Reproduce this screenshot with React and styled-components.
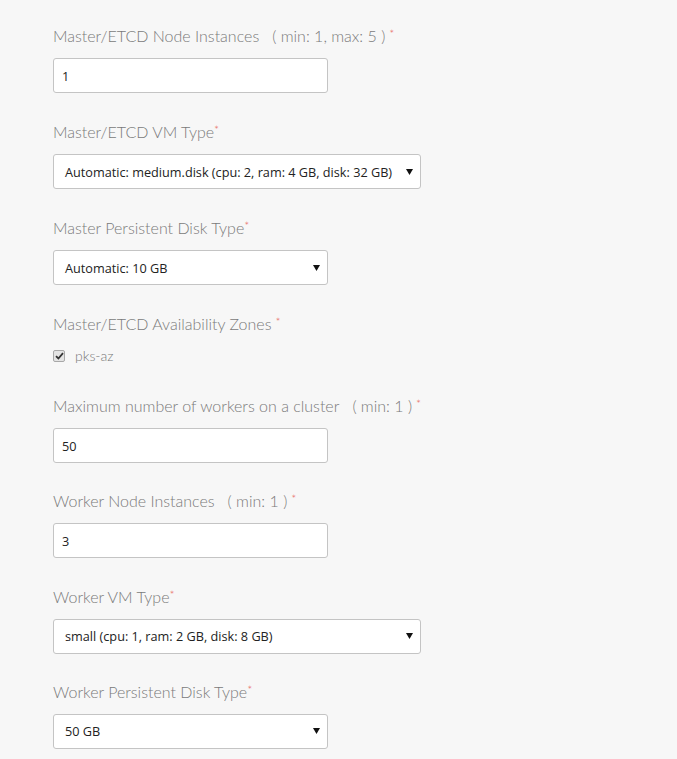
import React from 'react'
import styled, { createGlobalStyle } from 'styled-components'

const GlobalStyle = createGlobalStyle`
  html, body {
    margin: 0;
    background: #f7f7f7;
  }
`

const fields = [
  { label: 'Master/ETCD Node Instances', hint: '( min: 1, max: 5 )', kind: 'input', value: '1', width: 275 },
  { label: 'Master/ETCD VM Type', kind: 'select', value: 'Automatic: medium.disk (cpu: 2, ram: 4 GB, disk: 32 GB)', width: 368 },
  { label: 'Master Persistent Disk Type', kind: 'select', value: 'Automatic: 10 GB', width: 275 },
  { label: 'Master/ETCD Availability Zones', spaced: true, kind: 'check', value: 'pks-az' },
  { label: 'Maximum number of workers on a cluster', hint: '( min: 1 )', kind: 'input', value: '50', width: 275, tight: true },
  { label: 'Worker Node Instances', hint: '( min: 1 )', kind: 'input', value: '3', width: 275, tight: true },
  { label: 'Worker VM Type', kind: 'select', value: 'small (cpu: 1, ram: 2 GB, disk: 8 GB)', width: 368, tight: true },
  { label: 'Worker Persistent Disk Type', kind: 'select', value: '50 GB', width: 275, tight: true },
]

export default function App() {
  return (
    <Page>
      <GlobalStyle />
      {fields.map((f) => (
        <Field key={f.label} $check={f.kind === 'check'} $tight={f.tight}>
          <Label>
            {f.label}
            {f.hint && <Hint>{f.hint}</Hint>}
            <Required $spaced={f.hint || f.spaced}>*</Required>
          </Label>
          {f.kind === 'input' && <TextInput $width={f.width} defaultValue={f.value} />}
          {f.kind === 'select' && (
            <SelectBox $width={f.width}>
              <span>{f.value}</span>
              <Arrow width="7" height="6" viewBox="0 0 7 6">
                <path d="M0 0 H7 L3.5 6 Z" fill="#111" />
              </Arrow>
            </SelectBox>
          )}
          {f.kind === 'check' && (
            <CheckRow>
              <CheckBox>
                <svg width="9" height="8" viewBox="0 0 9 8">
                  <path d="M1 4.2 L3.4 6.5 L8 1.2" fill="none" stroke="#333" strokeWidth="1.8" />
                </svg>
              </CheckBox>
              <CheckLabel>{f.value}</CheckLabel>
            </CheckRow>
          )}
        </Field>
      ))}
    </Page>
  )
}

const Page = styled.div`
  padding: 25px 53px 0 53px;
  font-family: Lato, "Open Sans", sans-serif;
`

const Field = styled.div`
  display: flex;
  flex-direction: column;
  align-items: flex-start;
  gap: ${(p) => (p.$check ? '8px' : '11px')};
  margin-bottom: ${(p) => (p.$check ? '27px' : p.$tight ? '27.3px' : '28px')};
`

const Label = styled.label`
  font-size: 16px;
  line-height: 22px;
  font-weight: 300;
  color: #7a7a7a;
  white-space: nowrap;
`

const Hint = styled.span`
  margin-left: 13px;
`

const Required = styled.sup`
  color: #e8675d;
  font-size: 12px;
  line-height: 0;
  vertical-align: 4px;
  margin-left: ${(p) => (p.$spaced ? '4px' : '0')};
`

const TextInput = styled.input`
  box-sizing: border-box;
  width: ${(p) => p.$width}px;
  height: 35px;
  padding: 0 8px;
  border: 1px solid #c4c4c4;
  border-radius: 3px;
  background: #fff;
  font-family: "Open Sans", sans-serif;
  font-size: 12.7px;
  color: #222;
  outline: none;
`

const SelectBox = styled.div`
  box-sizing: border-box;
  width: ${(p) => p.$width}px;
  height: 35px;
  padding: 0 7px 0 11px;
  display: flex;
  align-items: center;
  justify-content: space-between;
  border: 1px solid #c4c4c4;
  border-radius: 3px;
  background: #fff;
  font-family: "Open Sans", sans-serif;
  font-size: 12.7px;
  color: #222;
`

const Arrow = styled.svg`
  flex-shrink: 0;
`

const CheckRow = styled.div`
  display: flex;
  align-items: center;
  gap: 10px;
  height: 25px;
`

const CheckBox = styled.span`
  box-sizing: border-box;
  width: 12px;
  height: 12px;
  border: 1px solid #a8a8a8;
  border-radius: 2px;
  background: #e4e4e4;
  display: flex;
  align-items: center;
  justify-content: center;
`

const CheckLabel = styled.span`
  font-size: 14px;
  font-weight: 300;
  color: #777;
`
